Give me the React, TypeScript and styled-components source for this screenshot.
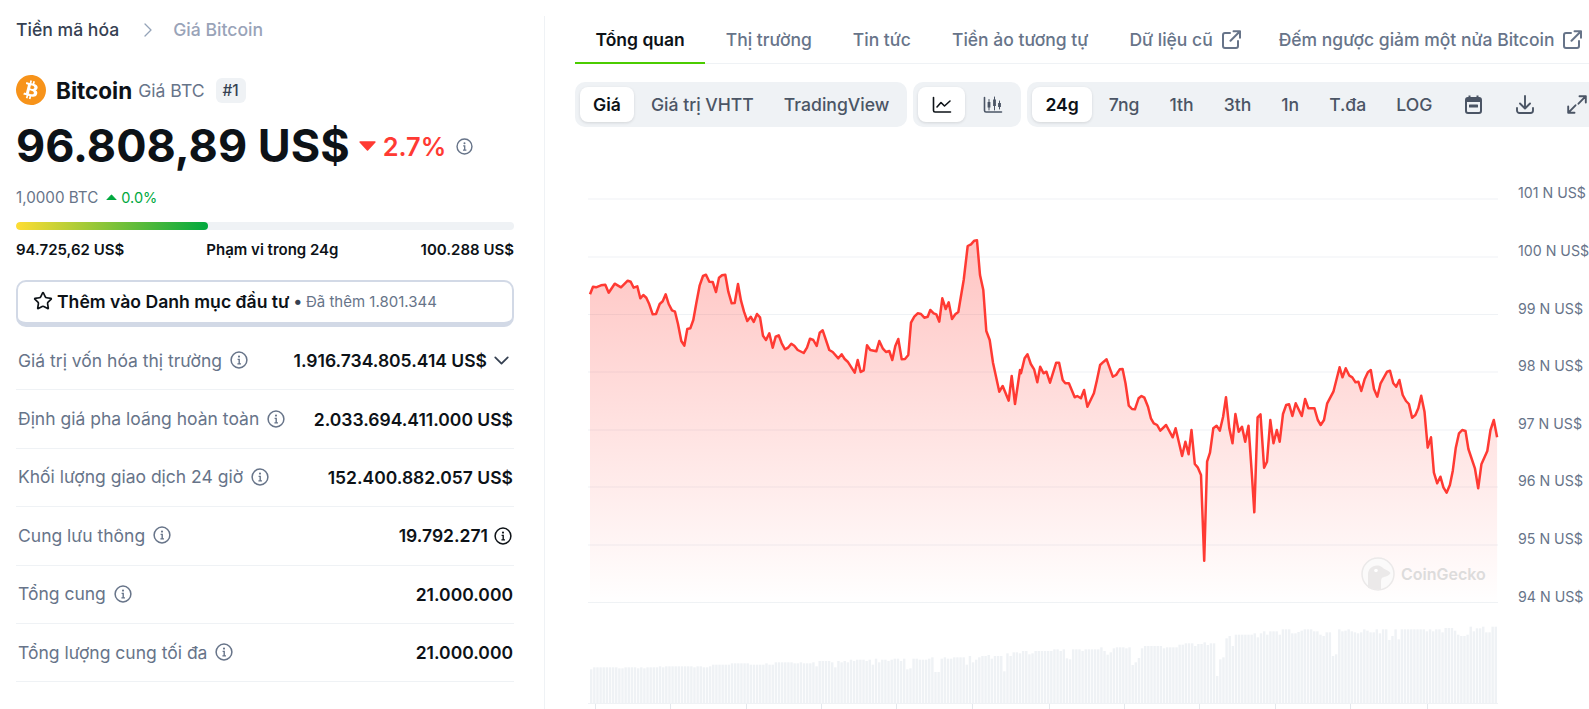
import React from "react";
import styled, { createGlobalStyle } from "styled-components";
import { ChevronDown, ChevronRight, Star } from "lucide-react";
import { SiBitcoin } from "react-icons/si";

const Global = createGlobalStyle`
  html, body { margin: 0; padding: 0; background: #fff; }
  body { font-family: Inter, "Noto Sans", sans-serif; overflow: hidden; }
  * { box-sizing: border-box; }
`;

const Page = styled.div`
  display: flex;
  width: 1589px;
  height: 709px;
  overflow: hidden;
  color: #0d1217;
`;
const Side = styled.aside`
  flex: 0 0 544px;
  padding: 18px 30px 0 16px;
`;
const Crumbs = styled.nav`
  display: flex;
  align-items: center;
  height: 24px;
  padding-bottom: 1px;
  font-size: 17.6px;
  font-weight: 500;
  color: #364152;
  svg { margin: 0 13px 0 17px; color: #94a3b8; }
`;
const CrumbNow = styled.span`
  color: #99a3b8;
`;
const CoinHead = styled.div`
  display: flex;
  align-items: center;
  height: 30px;
  margin-top: 33px;
`;
const Logo = styled.span`
  display: flex;
  width: 30px;
  height: 30px;
  border-radius: 50%;
  background: #fff;
  color: #f7931a;
  margin-right: 10px;
`;
const CoinName = styled.span`
  font-size: 22.5px;
  font-weight: 700;
`;
const CoinSym = styled.span`
  font-size: 17.6px;
  color: #677489;
  margin-left: 6px;
`;
const Rank = styled.span`
  display: flex;
  align-items: center;
  justify-content: center;
  width: 30px;
  height: 25px;
  margin-left: 11px;
  background: #eff2f5;
  border-radius: 6px;
  font-size: 15.4px;
  font-weight: 500;
  color: #364152;
`;
const PriceRow = styled.div`
  display: flex;
  align-items: center;
  height: 56px;
  margin-top: 13px;
`;
const Price = styled.span`
  font-size: 45px;
  font-weight: 700;
  line-height: 56px;
`;
const Change = styled.span<{ $up?: boolean; $big?: boolean }>`
  display: inline-flex;
  align-items: center;
  gap: ${(p) => (p.$big ? "7px" : "4px")};
  margin-left: ${(p) => (p.$big ? "9px" : "8px")};
  color: ${(p) => (p.$up ? "#00a83e" : "#ff3a33")};
  font-size: ${(p) => (p.$big ? "25.4px" : "14.5px")};
  font-weight: ${(p) => (p.$big ? 600 : 400)};
`;
const InfoWrap = styled.span<{ $gap?: number; $color?: string; $end?: number }>`
  display: inline-flex;
  margin-left: ${(p) => p.$gap ?? 8}px;
  margin-right: ${(p) => p.$end ?? 0}px;
  color: ${(p) => p.$color ?? "#677489"};
`;
const BtcRow = styled.div`
  display: flex;
  align-items: center;
  height: 20px;
  margin-top: 13px;
  font-size: 15.2px;
  color: #677489;
`;
const Track = styled.div`
  height: 8px;
  margin-top: 15px;
  border-radius: 4px;
  background: #eff2f5;
  overflow: hidden;
`;
const Fill = styled.div`
  height: 100%;
  border-radius: 4px;
  background: linear-gradient(90deg, #ffdd33, #00a83e);
`;
const RangeRow = styled.div`
  display: flex;
  justify-content: space-between;
  height: 20px;
  line-height: 20px;
  margin-top: 10px;
  font-size: 15px;
  font-weight: 600;
  color: #0d1217;
`;
const WatchBtn = styled.div`
  display: flex;
  align-items: center;
  height: 47px;
  margin-top: 20px;
  padding: 0 0 2px 15px;
  background: #fff;
  border: 2px solid #d2d9e6;
  border-bottom-width: 5px;
  border-radius: 10px;
  font-size: 17.6px;
  font-weight: 600;
  svg { margin-right: 4px; }
`;
const WatchNote = styled.span`
  font-size: 15px;
  font-weight: 400;
  color: #677489;
`;
const Dot = styled.span`
  margin: 0 4px 0 4px;
  font-size: 17px;
  color: #364152;
`;
const Rows = styled.div`
  margin-top: 5px;
`;
const Row = styled.div`
  display: flex;
  align-items: center;
  justify-content: space-between;
  height: 58.4px;
  border-bottom: 1px solid #eff2f5;
`;
const RowLabel = styled.span`
  display: flex;
  align-items: center;
  padding: 0 0 1px 2px;
  font-size: 17.5px;
  font-weight: 400;
  color: #677489;
`;
const RowValue = styled.span`
  display: flex;
  align-items: center;
  padding-right: 1px;
  font-size: 17.5px;
  font-weight: 600;
  color: #0d1217;
  svg.chev { margin-left: 2px; margin-right: -1px; color: #364152; }
`;

const Main = styled.main`
  flex: 1;
  min-width: 0;
  margin-top: 16px;
  padding-left: 30px;
  border-left: 1px solid #eff2f5;
  overflow: hidden;
`;
const Tabs = styled.div`
  display: flex;
  height: 48px;
  border-bottom: 1px solid #eff2f5;
  white-space: nowrap;
`;
const Tab = styled.div<{ $active?: boolean; $link?: boolean }>`
  display: flex;
  align-items: center;
  gap: 9px;
  height: 48px;
  padding: 1px ${(p) => (p.$link ? "17.5px" : "20.5px")} 0 20.5px;
  font-size: 17.5px;
  font-weight: ${(p) => (p.$active ? 600 : 500)};
  color: ${(p) => (p.$active ? "#0d1217" : "#677489")};
  border-bottom: 2px solid ${(p) => (p.$active ? "#4bcc00" : "transparent")};
  flex: none;
`;
const Toolbar = styled.div`
  display: flex;
  gap: 6px;
  margin-top: 18px;
  white-space: nowrap;
`;
const Group = styled.div`
  display: flex;
  flex: none;
  gap: 4px;
  height: 45px;
  padding: 5px;
  border-radius: 10px;
  background: #eff2f5;
`;
const ToolBtn = styled.div<{ $active?: boolean; $icon?: boolean; $narrow?: boolean }>`
  display: flex;
  align-items: center;
  justify-content: center;
  height: 35px;
  padding: ${(p) => (p.$icon ? "0" : "0 13px")};
  width: ${(p) => (p.$icon ? (p.$narrow ? "47px" : "48px") : "auto")};
  border-radius: 8px;
  font-size: 17.6px;
  font-weight: ${(p) => (p.$active ? 600 : 500)};
  color: ${(p) => (p.$active ? "#0d1217" : "#4b5565")};
  background: ${(p) => (p.$active ? "#fff" : "transparent")};
  box-shadow: ${(p) => (p.$active ? "0 1px 3px rgba(13,18,23,.12)" : "none")};
  flex: none;
`;
const ChartSvg = styled.svg`
  display: block;
  width: 1015px;
  height: 582px;
  font-family: Inter, sans-serif;
`;

const Info = ({ size = 18 }: { size?: number }) => (
  <svg width={size} height={size} viewBox="0 0 18 18" fill="none" stroke="currentColor" strokeWidth="1.5">
    <circle cx="9" cy="9" r="7.9" />
    <circle cx="9" cy="5.6" r="1.05" fill="currentColor" stroke="none" />
    <path d="M7.6 8.4H9.2V12.8M7.4 12.9H11" strokeWidth="1.4" />
  </svg>
);
const External = () => (
  <svg width="19" height="19" viewBox="0 0 19 19" fill="none" stroke="#677489" strokeWidth="2" strokeLinecap="round" strokeLinejoin="round">
    <path d="M8 3H3a2 2 0 0 0-2 2v11a2 2 0 0 0 2 2h11a2 2 0 0 0 2-2v-5" />
    <path d="M11.5 1.2H18V7.7M18 1.2 8.5 10.7" />
  </svg>
);
const Tri = ({ up, size }: { up?: boolean; size: number }) => (
  <svg width={size} height={size * 0.62} viewBox="0 0 16 10" fill="currentColor" stroke="currentColor" strokeWidth="1.5" strokeLinejoin="round">
    <path d={up ? "M1 9 8 1.5 15 9Z" : "M1 1 8 8.5 15 1Z"} />
  </svg>
);
const LineIcon = () => (
  <svg width="20" height="18" viewBox="0 0 20 18" fill="none" stroke="#0d1217" strokeWidth="1.6" strokeLinecap="round" strokeLinejoin="round">
    <path d="M1.5 1.5V14.5a1.5 1.5 0 0 0 1.5 1.5H18.5" />
    <path d="M5 11 9 6.5 12.5 10 18 5" />
  </svg>
);
const CandleIcon = () => (
  <svg width="20" height="18" viewBox="0 0 20 18" fill="none" stroke="#4b5565" strokeLinecap="round">
    <path d="M1.5 1.5V14.5a1.5 1.5 0 0 0 1.5 1.5H18.5" strokeWidth="1.6" />
    <path d="M6 3.5V14M11.5 1V14M16.5 5V13" strokeWidth="1" />
    <path d="M6 6V11.5M11.5 3.5V10M16.5 7V11" strokeWidth="2.8" strokeLinecap="butt" />
  </svg>
);
const CalIcon = () => (
  <svg width="17" height="19" viewBox="0 0 17 19" fill="none">
    <rect x="1" y="3" width="15" height="15" rx="2" stroke="#4b5565" strokeWidth="2" />
    <path d="M1 4.5a2 2 0 0 1 2-2h11a2 2 0 0 1 2 2V7H1Z" fill="#4b5565" />
    <path d="M4.5 0.5V3M12.5 0.5V3" stroke="#4b5565" strokeWidth="2" />
    <rect x="4" y="9.5" width="9" height="3" rx=".6" fill="#4b5565" />
  </svg>
);
const DownIcon = () => (
  <svg width="18" height="19" viewBox="0 0 18 19" fill="none" stroke="#4b5565" strokeWidth="1.9" strokeLinecap="round" strokeLinejoin="round">
    <path d="M9 1V13M4 8.5 9 13.5 14 8.5" />
    <path d="M1 13v2.5A2.5 2.5 0 0 0 3.500 18h11a2.500 2.500 0 0 0 2.500-2.500V13" />
  </svg>
);
const ExpandIcon = () => (
  <svg width="20" height="19" viewBox="0 0 20 19" fill="none" stroke="#4b5565" strokeWidth="1.9" strokeLinecap="round" strokeLinejoin="round">
    <path d="M12.500 1.200H18.800V7.500M18.800 1.200 11.500 8.700" />
    <path d="M1.200 11.500V17.800H7.500M1.200 17.800 8.500 10.300" />
  </svg>
);

// Price line traced from the picture: first list is x = 570 + zx/3, second x = 1020 + zx/2.756, y = 180 + zy/3 / 340 + zy/3.
const lineA: number[][] = [[57,343],[66,320],[75,322],[90,316],[103,314],[113,338],[131,311],[150,322],[170,302],[179,305],[188,323],[199,319],[208,355],[217,345],[226,353],[235,373],[245,403],[255,402],[266,372],[275,364],[284,343],[293,372],[303,391],[312,395],[321,432],[331,483],[340,497],[349,447],[358,445],[367,420],[376,370],[386,316],[396,288],[405,284],[415,305],[425,306],[435,336],[444,293],[453,286],[463,284],[472,335],[482,370],[491,369],[501,312],[510,362],[519,395],[529,423],[539,410],[548,426],[558,402],[567,412],[576,467],[585,480],[595,460],[605,503],[614,470],[623,466],[632,490],[642,508],[651,503],[661,491],[670,497],[680,510],[698,519],[708,503],[717,476],[727,480],[737,498],[746,458],[755,451],[775,510],[785,516],[802,535],[812,523],[821,537],[830,545],[851,578],[860,540],[869,576],[878,571],[888,496],[898,510],[916,514],[925,483],[935,505],[945,516],[955,513],[964,540],[973,498],[982,477],[992,538],[1002,537],[1012,525],[1020,428],[1030,410],[1040,400],[1050,402],[1060,413],[1070,410],[1078,390],[1088,400],[1096,403],[1105,425],[1114,355],[1124,387],[1133,367],[1143,417],[1153,403],[1162,396],[1178,300],[1190,198],[1200,193],[1210,182],[1218,181],[1227,285],[1237,330],[1246,453],[1256,480],[1266,548],[1285,635],[1295,618],[1313,662],[1322,588],[1332,672],[1347,570]];
const lineB: number[][] = [[0,100],[10,55],[18,43],[27,72],[36,88],[45,127],[53,80],[62,100],[70,95],[80,128],[97,68],[105,68],[115,120],[122,130],[132,130],[148,172],[155,168],[165,175],[174,150],[183,200],[201,160],[209,122],[218,75],[228,65],[236,58],[253,110],[262,105],[272,88],[280,87],[288,130],[297,197],[306,207],[314,208],[324,175],[332,168],[340,173],[350,200],[358,235],[366,250],[375,255],[384,272],[400,255],[418,292],[426,265],[444,348],[453,305],[462,343],[470,270],[479,372],[487,382],[496,405],[505,662],[513,365],[521,338],[530,265],[539,257],[548,272],[557,230],[565,172],[574,265],[583,310],[591,222],[600,275],[609,260],[618,305],[627,257],[636,400],[643,517],[652,232],[660,223],[670,383],[678,365],[687,240],[696,310],[705,270],[713,305],[722,222],[731,195],[739,193],[748,228],[757,190],[774,228],[783,177],[792,205],[809,205],[818,240],[826,255],[835,240],[844,190],[861,155],[878,82],[886,112],[895,85],[905,107],[913,112],[922,127],[930,125],[938,153],[947,118],[956,97],[964,90],[973,147],[982,170],[991,130],[1009,95],[1017,92],[1026,130],[1034,140],[1043,120],[1052,165],[1061,183],[1069,192],[1078,233],[1087,225],[1095,205],[1103,167],[1112,215],[1121,323],[1130,292],[1138,398],[1147,430],[1156,410],[1164,442],[1173,458],[1182,435],[1190,392],[1198,325],[1207,280],[1216,270],[1225,273],[1233,327],[1251,385],[1260,445],[1269,373],[1285,333],[1294,270],[1303,240],[1312,292]];
const pts = [
  ...lineA.map(([x, y]) => [570 + x / 3, 180 + y / 3]),
  ...lineB.map(([x, y]) => [1020 + x / 2.756, 340 + y / 3]),
];
const linePath = pts.map(([x, y]) => `${x.toFixed(1)},${y.toFixed(1)}`).join(" ");
const areaPath = `M${pts[0][0].toFixed(1)},606 L${linePath} L${pts[pts.length - 1][0].toFixed(1)},606Z`;

// Volume tops
const volA: number[][] = [[58,268],[66,262],[130,262],[136,265],[150,265],[160,262],[190,262],[198,265],[206,262],[218,265],[226,262],[250,262],[265,259],[275,262],[285,259],[305,259],[315,276],[322,259],[335,259],[342,284],[350,259],[362,262],[378,259],[390,254],[398,262],[408,265],[416,259],[425,254],[470,254],[482,250],[520,250],[532,254],[570,254],[578,250],[588,254],[605,247],[660,247],[670,250],[680,247],[690,250],[710,250],[720,247],[730,259],[738,243],[770,243],[778,247],[786,262],[795,243],[805,247],[815,243],[825,247],[832,239],[845,243],[858,239],[872,239],[880,243],[890,239],[898,254],[906,236],[915,247],[925,239],[945,243],[955,239],[962,236],[978,236],[985,243],[994,236],[1003,268],[1012,265],[1022,236],[1035,236],[1042,239],[1052,239],[1065,236],[1080,232],[1086,276],[1100,276],[1105,236],[1118,232],[1130,236],[1140,232],[1176,232],[1182,254],[1190,228],[1198,247],[1208,239],[1218,232],[1226,228],[1246,225],[1258,236],[1268,228],[1288,228],[1296,274],[1304,220],[1315,228],[1322,217],[1340,220],[1350,213],[1365,213],[1372,223]];
const volB: number[][] = [[0,100],[8,93],[60,93],[65,88],[80,93],[95,88],[104,115],[113,118],[120,88],[145,88],[152,93],[160,88],[205,85],[210,82],[218,93],[228,104],[236,97],[244,85],[252,82],[275,82],[282,85],[290,82],[298,135],[310,127],[320,114],[328,85],[338,78],[390,78],[398,85],[406,82],[436,82],[444,74],[460,70],[486,70],[492,78],[500,72],[520,67],[528,75],[538,70],[552,70],[556,168],[564,118],[574,112],[582,55],[592,48],[602,78],[612,44],[628,44],[634,78],[642,44],[660,44],[670,40],[680,52],[688,40],[698,34],[706,44],[716,34],[730,34],[738,44],[746,34],[755,28],[768,28],[775,40],[790,40],[795,36],[810,32],[820,28],[835,28],[842,34],[860,34],[866,44],[876,48],[885,37],[892,37],[898,108],[906,103],[915,28],[925,34],[935,32],[945,28],[955,34],[965,37],[975,40],[985,37],[992,28],[1003,32],[1010,37],[1022,37],[1030,28],[1038,40],[1048,28],[1060,28],[1066,60],[1076,48],[1084,28],[1092,28],[1096,58],[1104,28],[1176,28],[1182,34],[1190,28],[1198,34],[1208,28],[1222,28],[1228,37],[1236,24],[1260,24],[1266,32],[1274,20],[1280,44],[1290,48],[1302,44],[1310,20],[1318,20],[1322,34],[1332,25],[1356,20],[1362,37],[1375,37],[1380,20],[1404,20]];
const volKeys = [
  ...volA.map(([x, y]) => [570 + x / 3, 580 + y / 3]),
  ...volB.map(([x, y]) => [1030 + x / 3, 620 + y / 3]),
];
const volBars = Array.from({ length: 290 }, (_, i) => {
  const x = 589 + i * 3.13;
  let top = volKeys[0][1];
  for (const k of volKeys) {
    if (k[0] <= x + 1) top = k[1];
  }
  return { x, top };
});

const gridY = [199, 257, 314.5, 372, 430, 487, 545, 602.5];
const yLabels = ["101", "100", "99", "98", "97", "96", "95", "94"];
const ticks = [594, 669, 745, 820, 895, 971, 1048, 1123, 1198, 1274, 1349, 1426];

const Chart = () => (
  <ChartSvg viewBox="574 127 1015 582">
    <defs>
      <linearGradient id="area" gradientUnits="userSpaceOnUse" x1="0" y1="240" x2="0" y2="605">
        <stop offset="0" stopColor="#ff3a33" stopOpacity=".3" />
        <stop offset="1" stopColor="#ff3a33" stopOpacity="0" />
      </linearGradient>
    </defs>
    {gridY.map((y, i) => (
      <React.Fragment key={y}>
        <rect x="587" y={y - 0.5} width="910" height="1" fill="#eff2f5" />
        <text x="1517" y={y - 1} fontSize="14.2" fill="#677489">{yLabels[i]} N US$</text>
      </React.Fragment>
    ))}
    <path d={areaPath} fill="url(#area)" />
    <polyline points={linePath} fill="none" stroke="#ff3a33" strokeWidth="2.5" strokeLinejoin="round" />
    <circle cx="1377" cy="574" r="16" fill="#fbfafa" stroke="#ebe9e9" strokeWidth="1.5" />
    <path d="M1367 588V575c0-6 4-9.500 9-9.500 4 0 5 2 7.500 3.500 3 1.500 5 2.500 6 4 -1.500 3-5 3.500-8 4.500 -1.500 1-1.500 3-1.500 5.500V590Z" fill="#ebe9e9" />
    <circle cx="1375" cy="570.500" r="1.800" fill="#fff" />
    <text x="1400" y="579.500" fontSize="16" fontWeight="600" fill="#dddcdc">CoinGecko</text>
    {volBars.map((b) => (
      <rect key={b.x} x={b.x} y={b.top} width="2.400" height={703 - b.top} fill="#eff2f5" />
    ))}
    <rect x="587" y="703" width="910" height="1" fill="#eff2f5" />
    {ticks.map((x) => (
      <rect key={x} x={x} y="704" width="1" height="5" fill="#e3e7ec" />
    ))}
  </ChartSvg>
);

const stats: { label: string; value: string; chevron?: boolean; valueInfo?: boolean }[] = [
  { label: "Giá trị vốn hóa thị trường", value: "1.916.734.805.414 US$", chevron: true },
  { label: "Định giá pha loãng hoàn toàn", value: "2.033.694.411.000 US$" },
  { label: "Khối lượng giao dịch 24 giờ", value: "152.400.882.057 US$" },
  { label: "Cung lưu thông", value: "19.792.271", valueInfo: true },
  { label: "Tổng cung", value: "21.000.000" },
  { label: "Tổng lượng cung tối đa", value: "21.000.000" },
];

export default function App() {
  return (
    <Page>
      <Global />
      <Side>
        <Crumbs>
          Tiền mã hóa
          <ChevronRight size={24} strokeWidth={1.3} />
          <CrumbNow>Giá Bitcoin</CrumbNow>
        </Crumbs>
        <CoinHead>
          <Logo><SiBitcoin size={30} /></Logo>
          <CoinName>Bitcoin</CoinName>
          <CoinSym>Giá BTC</CoinSym>
          <Rank>#1</Rank>
        </CoinHead>
        <PriceRow>
          <Price>96.808,89 US$</Price>
          <Change $big><Tri size={17} />2.7%</Change>
          <InfoWrap $gap={10}><Info size={17} /></InfoWrap>
        </PriceRow>
        <BtcRow>
          1,0000 BTC
          <Change $up><Tri up size={11} />0.0%</Change>
        </BtcRow>
        <Track><Fill style={{ width: `${(192 / 498) * 100}%` }} /></Track>
        <RangeRow>
          <span>94.725,62 US$</span>
          <span>Phạm vi trong 24g</span>
          <span>100.288 US$</span>
        </RangeRow>
        <WatchBtn>
          <Star size={20} strokeWidth={2} />
          Thêm vào Danh mục đầu tư
          <Dot>•</Dot>
          <WatchNote>Đã thêm 1.801.344</WatchNote>
        </WatchBtn>
        <Rows>
          {stats.map((s) => (
            <Row key={s.label}>
              <RowLabel>{s.label}<InfoWrap><Info /></InfoWrap></RowLabel>
              <RowValue>
                {s.value}
                {s.valueInfo && <InfoWrap $gap={6} $end={1} $color="#0d1217"><Info /></InfoWrap>}
                {s.chevron && <ChevronDown className="chev" size={25} strokeWidth={1.7} />}
              </RowValue>
            </Row>
          ))}
        </Rows>
      </Side>
      <Main>
        <Tabs>
          <Tab $active>Tổng quan</Tab>
          <Tab>Thị trường</Tab>
          <Tab>Tin tức</Tab>
          <Tab>Tiền ảo tương tự</Tab>
          <Tab $link>Dữ liệu cũ <External /></Tab>
          <Tab $link>Đếm ngược giảm một nửa Bitcoin <External /></Tab>
        </Tabs>
        <Toolbar>
          <Group>
            <ToolBtn $active>Giá</ToolBtn>
            <ToolBtn>Giá trị VHTT</ToolBtn>
            <ToolBtn>TradingView</ToolBtn>
          </Group>
          <Group>
            <ToolBtn $active $icon $narrow><LineIcon /></ToolBtn>
            <ToolBtn $icon $narrow><CandleIcon /></ToolBtn>
          </Group>
          <Group>
            <ToolBtn $active>24g</ToolBtn>
            <ToolBtn>7ng</ToolBtn>
            <ToolBtn>1th</ToolBtn>
            <ToolBtn>3th</ToolBtn>
            <ToolBtn>1n</ToolBtn>
            <ToolBtn>T.đa</ToolBtn>
            <ToolBtn>LOG</ToolBtn>
            <ToolBtn $icon><CalIcon /></ToolBtn>
            <ToolBtn $icon><DownIcon /></ToolBtn>
            <ToolBtn $icon><ExpandIcon /></ToolBtn>
          </Group>
        </Toolbar>
        <Chart />
      </Main>
    </Page>
  );
}
